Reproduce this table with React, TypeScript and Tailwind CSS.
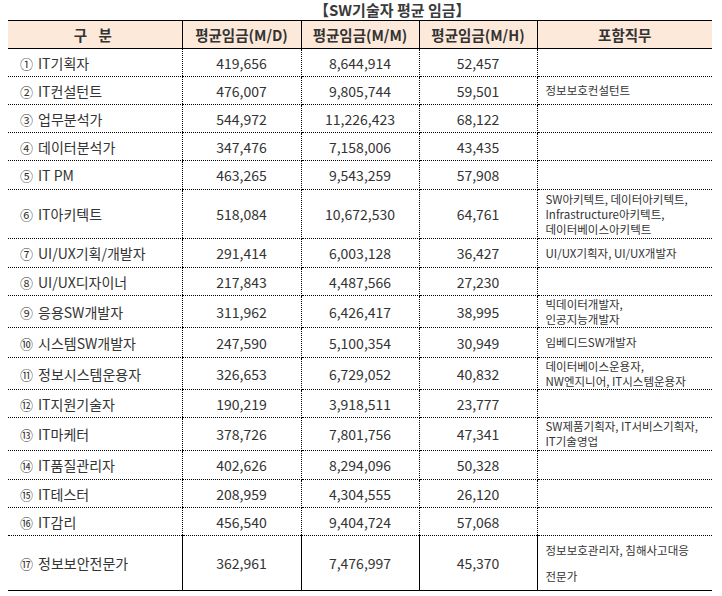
import React from "react";

type Row = {
  no: string;
  name: string;
  md: string;
  mm: string;
  mh: string;
  jobs: string[];
  h: string;
  lead?: string;
};

const rows: Row[] = [
  { no: "①", name: "IT기획자", md: "419,656", mm: "8,644,914", mh: "52,457", jobs: [], h: "h-[28px]" },
  { no: "②", name: "IT컨설턴트", md: "476,007", mm: "9,805,744", mh: "59,501", jobs: ["정보보호컨설턴트"], h: "h-[28px]" },
  { no: "③", name: "업무분석가", md: "544,972", mm: "11,226,423", mh: "68,122", jobs: [], h: "h-[28px]" },
  { no: "④", name: "데이터분석가", md: "347,476", mm: "7,158,006", mh: "43,435", jobs: [], h: "h-[28px]" },
  { no: "⑤", name: "IT PM", md: "463,265", mm: "9,543,259", mh: "57,908", jobs: [], h: "h-[29px]" },
  {
    no: "⑥",
    name: "IT아키텍트",
    md: "518,084",
    mm: "10,672,530",
    mh: "64,761",
    jobs: ["SW아키텍트, 데이터아키텍트,", "Infrastructure아키텍트,", "데이터베이스아키텍트"],
    h: "h-[49px]",
  },
  { no: "⑦", name: "UI/UX기획/개발자", md: "291,414", mm: "6,003,128", mh: "36,427", jobs: ["UI/UX기획자, UI/UX개발자"], h: "h-[29px]" },
  { no: "⑧", name: "UI/UX디자이너", md: "217,843", mm: "4,487,566", mh: "27,230", jobs: [], h: "h-[28px]" },
  { no: "⑨", name: "응용SW개발자", md: "311,962", mm: "6,426,417", mh: "38,995", jobs: ["빅데이터개발자,", "인공지능개발자"], h: "h-[32px]" },
  { no: "⑩", name: "시스템SW개발자", md: "247,590", mm: "5,100,354", mh: "30,949", jobs: ["임베디드SW개발자"], h: "h-[30px]" },
  { no: "⑪", name: "정보시스템운용자", md: "326,653", mm: "6,729,052", mh: "40,832", jobs: ["데이터베이스운용자,", "NW엔지니어, IT시스템운용자"], h: "h-[32px]" },
  { no: "⑫", name: "IT지원기술자", md: "190,219", mm: "3,918,511", mh: "23,777", jobs: [], h: "h-[28px]" },
  { no: "⑬", name: "IT마케터", md: "378,726", mm: "7,801,756", mh: "47,341", jobs: ["SW제품기획자, IT서비스기획자,", "IT기술영업"], h: "h-[33px]" },
  { no: "⑭", name: "IT품질관리자", md: "402,626", mm: "8,294,096", mh: "50,328", jobs: [], h: "h-[29px]" },
  { no: "⑮", name: "IT테스터", md: "208,959", mm: "4,304,555", mh: "26,120", jobs: [], h: "h-[28px]" },
  { no: "⑯", name: "IT감리", md: "456,540", mm: "9,404,724", mh: "57,068", jobs: [], h: "h-[28px]" },
  {
    no: "⑰",
    name: "정보보안전문가",
    md: "362,961",
    mm: "7,476,997",
    mh: "45,370",
    jobs: ["정보보호관리자, 침해사고대응", "전문가"],
    h: "h-[55px]",
    lead: "leading-[26px]",
  },
];

export default function App() {
  return (
    <div className="w-[722px] h-[596px] bg-white text-[#333] font-['Noto_Sans_CJK_KR','Noto_Sans',sans-serif]">
      {/* 표 제목 */}
      <div className="h-[20px] pl-[314px] text-[15px] font-bold leading-[20px] text-[#3a3a3a]">
        【SW기술자 평균 임금】
      </div>

      <table className="ml-[8px] w-[704px] table-fixed border-collapse">
        <colgroup>
          <col className="w-[174px]" />
          <col className="w-[119px]" />
          <col className="w-[118px]" />
          <col className="w-[118px]" />
          <col className="w-[175px]" />
        </colgroup>
        <thead>
          <tr className="h-[28px] bg-[#fde9d9] text-[14.5px] font-bold">
            <th className="border-y border-black text-center font-bold tracking-[4px]">구 분</th>
            <th className="border border-black text-center font-bold">평균임금(M/D)</th>
            <th className="border border-black text-center font-bold">평균임금(M/M)</th>
            <th className="border border-black text-center font-bold">평균임금(M/H)</th>
            <th className="border-y border-black text-center font-bold">포함직무</th>
          </tr>
        </thead>
        <tbody className="text-[14px]">
          {rows.map((r, i) => {
            const last = i === rows.length - 1;
            const rowBorder = last ? "border-b border-solid border-black" : "border-b border-dotted border-black";
            return (
              <tr key={r.no} className={r.h}>
                <td className={`${rowBorder} pl-[12px] whitespace-nowrap leading-none`}>
                  <span className="text-[13px]">{r.no}</span>
                  <span className="ml-[5px]">{r.name}</span>
                </td>
                <td className={`${rowBorder} border-x border-x-black border-x-solid text-center leading-none`}>{r.md}</td>
                <td className={`${rowBorder} border-x border-x-black border-x-solid text-center leading-none`}>{r.mm}</td>
                <td className={`${rowBorder} border-x border-x-black border-x-solid text-center leading-none`}>{r.mh}</td>
                <td className={`${rowBorder} pl-[8px] text-[11.5px] ${r.lead ?? "leading-[15px]"}`}>
                  {r.jobs.map((j) => (
                    <div key={j} className="whitespace-nowrap">
                      {j}
                    </div>
                  ))}
                </td>
              </tr>
            );
          })}
        </tbody>
      </table>
    </div>
  );
}
